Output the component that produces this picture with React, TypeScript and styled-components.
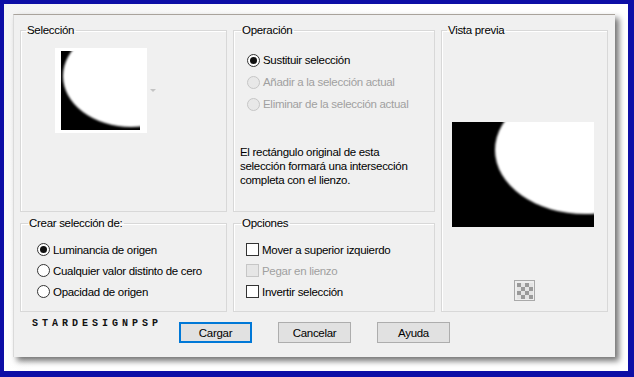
import styled, { createGlobalStyle } from "styled-components";

const GlobalStyle = createGlobalStyle`
  html, body {
    margin: 0;
    padding: 0;
    background: #0d0ea6;
  }
  body {
    font-family: "Liberation Sans", Arial, sans-serif;
    font-size: 11.5px;
    letter-spacing: -0.3px;
    color: #000;
  }
`;

type Opt = { label: string; checked?: boolean; disabled?: boolean };

const operations: Opt[] = [
  { label: "Sustituir selección", checked: true },
  { label: "Añadir a la selección actual", disabled: true },
  { label: "Eliminar de la selección actual", disabled: true },
];

const sources: Opt[] = [
  { label: "Luminancia de origen", checked: true },
  { label: "Cualquier valor distinto de cero" },
  { label: "Opacidad de origen" },
];

const options: Opt[] = [
  { label: "Mover a superior izquierdo" },
  { label: "Pegar en lienzo", disabled: true },
  { label: "Invertir selección" },
];

const MaskImage = ({ w, h, cx, cy, rx, ry, id }: { w: number; h: number; cx: number; cy: number; rx: number; ry: number; id: string }) => (
  <svg width={w} height={h} viewBox={`0 0 ${w} ${h}`}>
    <defs>
      <filter id={id} x="-10%" y="-10%" width="120%" height="120%">
        <feGaussianBlur stdDeviation="0.8" />
      </filter>
      <clipPath id={`${id}c`}>
        <rect width={w} height={h} />
      </clipPath>
    </defs>
    <rect width={w} height={h} fill="#000" />
    <g clipPath={`url(#${id}c)`}>
      <ellipse cx={cx} cy={cy} rx={rx} ry={ry} fill="#fff" filter={`url(#${id})`} />
    </g>
  </svg>
);

const Checker = () => (
  <svg width="21" height="21" viewBox="0 0 21 21">
    <rect x="0.5" y="0.5" width="20" height="20" fill="#eeeeee" stroke="#a9a9a9" />
    {Array.from({ length: 16 }).map((_, i) => {
      const r = Math.floor(i / 4);
      const c = i % 4;
      return (
        <rect
          key={i}
          x={3 + c * 4}
          y={3 + r * 4}
          width="4"
          height="4"
          fill={(r + c) % 2 === 0 ? "#9a9a9a" : "#e4e4e4"}
        />
      );
    })}
  </svg>
);

const App = () => {
  return (
    <>
      <GlobalStyle />
      <Frame>
        <Paper>
          <Dialog>
            <Groups>
              <Group $area="sel">
                <Legend $indent={5}>Selección</Legend>
                <ThumbRow>
                  <Thumb>
                    <MaskImage id="t" w={79} h={79} cx={70} cy={25} rx={68} ry={51} />
                  </Thumb>
                  <Arrow />
                </ThumbRow>
              </Group>

              <Group $area="op">
                <Legend $indent={7}>Operación</Legend>
                <List $top={12} $left={13} $row={22}>
                  {operations.map((o) => (
                    <Choice key={o.label} $disabled={o.disabled}>
                      <Radio $checked={o.checked} $disabled={o.disabled} />
                      {o.label}
                    </Choice>
                  ))}
                </List>
                <Note>
                  El rectángulo original de esta
                  <br />
                  selección formará una intersección
                  <br />
                  completa con el lienzo.
                </Note>
              </Group>

              <Group $area="prev">
                <Legend $indent={5}>Vista previa</Legend>
                <PreviewBox>
                  <MaskImage id="p" w={142} h={105} cx={133} cy={28} rx={90} ry={64} />
                </PreviewBox>
                <CheckerHolder>
                  <Checker />
                </CheckerHolder>
              </Group>

              <Group $area="src">
                <Legend $indent={7}>Crear selección de:</Legend>
                <List $top={9} $left={16} $row={21}>
                  {sources.map((o) => (
                    <Choice key={o.label} $disabled={o.disabled}>
                      <Radio $checked={o.checked} $disabled={o.disabled} />
                      {o.label}
                    </Choice>
                  ))}
                </List>
              </Group>

              <Group $area="opt">
                <Legend $indent={7}>Opciones</Legend>
                <List $top={9} $left={12} $row={21}>
                  {options.map((o) => (
                    <Choice key={o.label} $disabled={o.disabled}>
                      <Box $disabled={o.disabled} />
                      {o.label}
                    </Choice>
                  ))}
                </List>
              </Group>
            </Groups>

            <Footer>
              <Watermark>STARDESIGNPSP</Watermark>
              <Buttons>
                <Button $primary>Cargar</Button>
                <Button>Cancelar</Button>
                <Button>Ayuda</Button>
              </Buttons>
            </Footer>
          </Dialog>
        </Paper>
      </Frame>
    </>
  );
};

export default App;

const Frame = styled.div`
  width: 634px;
  height: 377px;
  box-sizing: border-box;
  padding: 4px 6px 6px 4px;
  background: #0d0ea6;
`;

const Paper = styled.div`
  width: 100%;
  height: 100%;
  box-sizing: border-box;
  padding: 10px 0 0 9px;
  background: linear-gradient(135deg, #f4f4f4, #ffffff 40%);
`;

const Dialog = styled.div`
  width: 602px;
  height: 343px;
  box-sizing: border-box;
  background: #f0f0f0;
  border-top: 1px solid #a9a39c;
  border-left: 1px solid #dadada;
  box-shadow: 4px 4px 6px rgba(0, 0, 0, 0.55);
  padding: 8px 0 0 6px;
  display: flex;
  flex-direction: column;
`;

const Groups = styled.div`
  display: grid;
  grid-template-columns: 207px 202px 167px;
  grid-template-rows: 189px 96px;
  grid-template-areas:
    "sel op prev"
    "src opt prev";
  column-gap: 6px;
  row-gap: 4px;
`;

const Group = styled.fieldset<{ $area: string }>`
  grid-area: ${(p) => p.$area};
  margin: 0;
  padding: 0;
  min-width: 0;
  border: 1px solid #d8d8d8;
  box-shadow: inset 1px 1px 0 #ffffff;
  display: flex;
  flex-direction: column;
`;

const Legend = styled.legend<{ $indent: number }>`
  margin-left: ${(p) => p.$indent}px;
  padding: 0 2px 0 1px;
  line-height: 14px;
`;

const ThumbRow = styled.div`
  display: flex;
  align-items: center;
  margin: 11px 0 0 34px;
`;

const Thumb = styled.div`
  width: 92px;
  height: 85px;
  box-sizing: border-box;
  background: #fff;
  padding: 3px 0 0 6px;
`;

const Arrow = styled.div`
  width: 0;
  height: 0;
  margin-left: 3px;
  border-left: 3px solid transparent;
  border-right: 3px solid transparent;
  border-top: 3px solid #c4c4c4;
`;

const List = styled.div<{ $top: number; $left: number; $row: number }>`
  display: grid;
  grid-auto-rows: ${(p) => p.$row}px;
  margin: ${(p) => p.$top}px 0 0 ${(p) => p.$left}px;
`;

const Choice = styled.div<{ $disabled?: boolean }>`
  display: flex;
  align-items: center;
  gap: 3px;
  color: ${(p) => (p.$disabled ? "#a0a0a0" : "#000")};
  white-space: nowrap;
`;

const Radio = styled.span<{ $checked?: boolean; $disabled?: boolean }>`
  width: 13px;
  height: 13px;
  box-sizing: border-box;
  border-radius: 50%;
  border: 1px solid ${(p) => (p.$disabled ? "#c6c6c6" : "#333")};
  background: ${(p) => (p.$disabled ? "#e8e8e8" : "#fff")};
  display: flex;
  align-items: center;
  justify-content: center;

  &::after {
    content: "";
    width: 7px;
    height: 7px;
    border-radius: 50%;
    background: #111;
    display: ${(p) => (p.$checked ? "block" : "none")};
  }
`;

const Box = styled.span<{ $disabled?: boolean }>`
  width: 13px;
  height: 13px;
  box-sizing: border-box;
  border: 1px solid ${(p) => (p.$disabled ? "#c6c6c6" : "#333")};
  background: ${(p) => (p.$disabled ? "#e6e6e6" : "#fff")};
`;

const Note = styled.p`
  margin: 30px 0 0 6px;
  line-height: 14px;
`;

const PreviewBox = styled.div`
  margin: 85px 0 0 10px;
  line-height: 0;
`;

const CheckerHolder = styled.div`
  display: flex;
  justify-content: center;
  margin-top: 53px;
  line-height: 0;
`;

const Footer = styled.div`
  display: flex;
  align-items: flex-start;
  margin-top: 7px;
  padding-left: 12px;
`;

const Watermark = styled.div`
  width: 147px;
  font-family: "Liberation Mono", "DejaVu Sans Mono", monospace;
  font-weight: bold;
  font-size: 10px;
  letter-spacing: 4px;
  line-height: 10px;
  color: #111;
`;

const Buttons = styled.div`
  display: flex;
  gap: 26px;
  margin-top: 3px;
`;

const Button = styled.button<{ $primary?: boolean }>`
  width: 73px;
  height: 21px;
  padding: 0;
  font-family: inherit;
  font-size: inherit;
  letter-spacing: inherit;
  color: #000;
  background: #e1e1e1;
  border: 1px solid ${(p) => (p.$primary ? "#0078d7" : "#adadad")};
  box-shadow: ${(p) => (p.$primary ? "inset 0 0 0 1px #0078d7" : "none")};
`;
